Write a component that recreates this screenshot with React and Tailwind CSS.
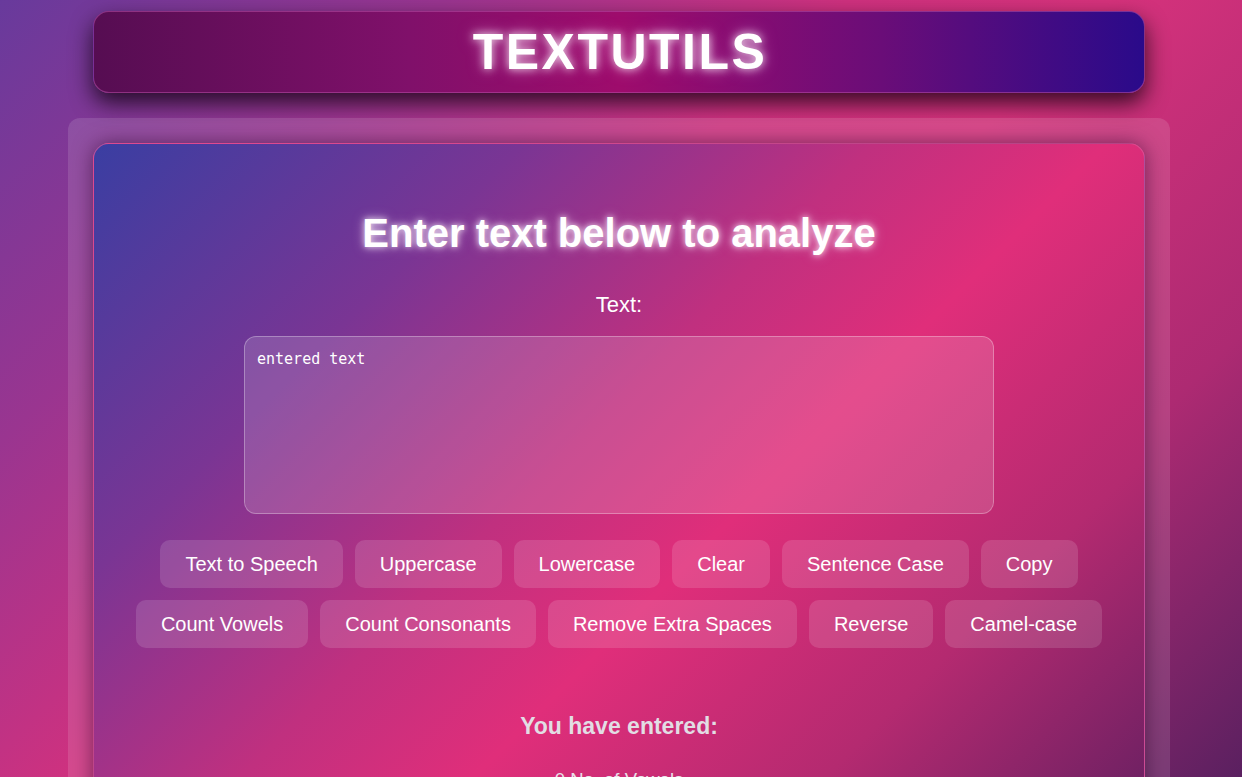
export default function App() {
  const row1 = ["Text to Speech", "Uppercase", "Lowercase", "Clear", "Sentence Case", "Copy"];
  const row2 = ["Count Vowels", "Count Consonants", "Remove Extra Spaces", "Reverse", "Camel-case"];
  const btn =
    "h-12 px-[25px] rounded-[10px] bg-white/[0.13] text-white text-[20px] leading-6 whitespace-nowrap";
  return (
    <div className="h-[777px] overflow-hidden bg-[linear-gradient(135deg,#683a9c_0%,#9a3590_22%,#cf317f_42%,#d6327c_55%,#ad2a72_78%,#5a2060_100%)] font-['Liberation_Sans',Arial,sans-serif]">
      <div className="ml-[68px] w-[1102px] pt-[11px]">
        <div className="mx-[25px] h-[82px] rounded-2xl border border-[#b04aa0]/60 bg-[linear-gradient(90deg,#560d52_0%,#80106a_30%,#9e0c6c_50%,#6a0d78_75%,#2a0a8a_100%)] shadow-[0_10px_22px_rgba(15,0,15,0.8)] flex items-center justify-center">
          <h1 className="text-[50px] leading-none font-bold tracking-[2.5px] text-white [text-shadow:0_0_8px_rgba(255,255,255,0.8),0_0_16px_rgba(255,200,255,0.5)] pl-[2px]">
            TEXTUTILS
          </h1>
        </div>
        <div className="mt-[25px] rounded-xl bg-white/[0.12] px-[25px] pt-[25px]">
          <div className="min-h-[900px] rounded-2xl border border-[#e0559a]/70 bg-[linear-gradient(135deg,#3a3ea2_0%,#7a3594_22%,#c0307f_40%,#e02e7a_52%,#b42a70_70%,#6a2062_88%,#4d1c58_100%)] shadow-[0_0_20px_rgba(40,0,40,0.55)] flex flex-col items-center pt-[66px]">
            <h2 className="text-[40px] leading-[46px] font-bold text-white [text-shadow:0_0_6px_rgba(255,255,255,0.8),0_0_12px_rgba(255,220,255,0.5)]">
              Enter text below to analyze
            </h2>
            <label className="mt-[36px] text-[22px] leading-[26px] text-white">Text:</label>
            <textarea
              defaultValue="entered text"
              className="mt-[18px] w-[750px] h-[178px] resize-none rounded-xl border border-white/30 bg-white/[0.15] px-3 py-[12px] text-[15px] leading-5 text-white font-['DejaVu_Sans_Mono',monospace] outline-none"
            />
            <div className="mt-[26px] flex gap-3 justify-center">
              {row1.map((t) => (
                <button key={t} className={btn}>{t}</button>
              ))}
            </div>
            <div className="mt-3 flex gap-3 justify-center">
              {row2.map((t) => (
                <button key={t} className={btn}>{t}</button>
              ))}
            </div>
            <h3 className="mt-[65px] text-[23px] leading-[26px] font-bold text-[#e2dde4]">You have entered:</h3>
            <p className="mt-[30px] text-[18.5px] leading-[22px] text-[#e8e2ea]">0 No. of Vowels</p>
            <p className="mt-3 text-[18.5px] leading-[22px] text-[#e8e2ea]">0 No. of Consonants</p>
            <p className="mt-3 text-[18.5px] leading-[22px] text-[#e8e2ea]">0 Words and 12 Characters</p>
          </div>
        </div>
      </div>
    </div>
  );
}
